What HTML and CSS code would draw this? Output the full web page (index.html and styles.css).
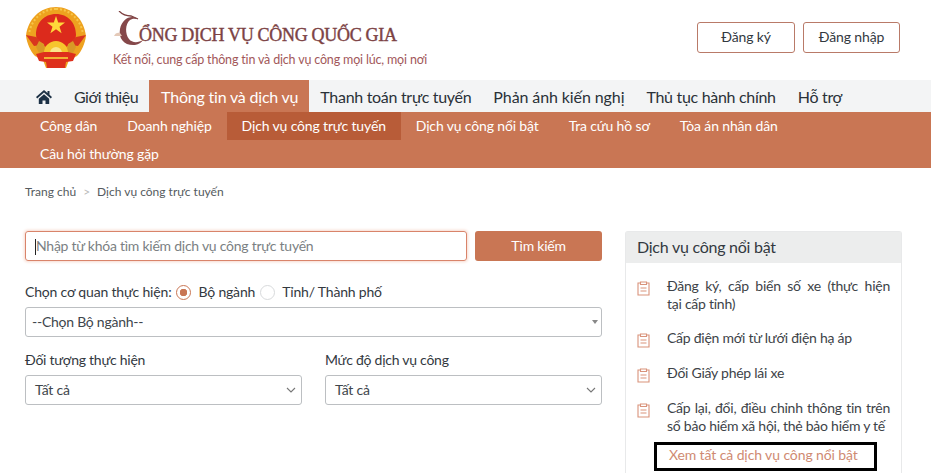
FILE: index.html
```html
<!DOCTYPE html>
<html lang="vi">
<head>
<meta charset="utf-8">
<title>Cổng Dịch vụ công Quốc gia</title>
<link rel="stylesheet" href="styles.css">
</head>
<body>
<header class="top">
  <div class="brand">
    <svg class="emblem" viewBox="0 0 60 62" width="60" height="62">
      <path d="M30 0C14 0 2 12 0 29c1 7 4 15 9 20l8 4 3 8h20l3-8 8-4c5-5 8-13 9-20C58 12 46 0 30 0z" fill="#eea21f"/>
      <path d="M30 2C16 2 5 13 3 27" fill="none" stroke="#f7c64a" stroke-width="2" stroke-dasharray="2 2"/>
      <path d="M30 2c14 0 25 11 27 25" fill="none" stroke="#f7c64a" stroke-width="2" stroke-dasharray="2 2"/>
      <path d="M10 28C10 16 18 7 30 7s20 9 20 21l-1 7c-4 0-7 2-8 5-3-3-7-4-11-4s-8 1-11 4c-1-3-4-5-8-5z" fill="#dc2a1c"/>
      <polygon points="30,9 32.200,15.500 39,15.500 33.500,19.700 35.600,26.200 30,22.200 24.400,26.200 26.500,19.700 21,15.500 27.800,15.500" fill="#ffd83a"/>
      <path d="M0 28l10 2 6 5-1 3-7 1zM60 28l-10 2-6 5 1 3 7 1z" fill="#d9351e"/>
      <path d="M13 34l5 3 1 8-5 3-4-8zM47 34l-5 3-1 8 5 3 4-8z" fill="#d89a26"/>
      <path d="M18 46a12 12 0 0 1 24 0z" fill="#f6c52d"/>
      <path d="M24 46a6 6 0 0 1 12 0z" fill="#fbe58a"/>
      <path d="M10 47l8-2h24l8 2-3 7-7 1-1 6H21l-1-6-7-1z" fill="#de2f1c"/>
      <path d="M18 50h24v2H18z" fill="#f2b233"/>
    </svg>
    <div class="brand-text">
      <div class="brand-title">
        <svg class="brand-mark" viewBox="0 0 32 36" width="32" height="36">
          <path d="M6 0c3 3 7 5 12 5l7 3" fill="none" stroke="#7d4040" stroke-width="1.300"/>
          <path d="M25 8C18 3 9 8 7 18c-2 10 5 17 15 16 4-.5 7-3 8-5-5 3-11 3-14-1-4-5-4-15 1-19 3-2 6-1 8-1z" fill="#85484a"/>
          <path d="M1 25c1-3 4-4 6-3l2 3H2z" fill="#e4c9b8"/>
        </svg>
        <span class="brand-name">ỔNG DỊCH VỤ CÔNG QUỐC GIA</span>
      </div>
      <div class="brand-sub">Kết nối, cung cấp thông tin và dịch vụ công mọi lúc, mọi nơi</div>
    </div>
  </div>
  <div class="auth">
    <a class="auth-btn auth-reg">Đăng ký</a>
    <a class="auth-btn auth-login">Đăng nhập</a>
  </div>
</header>

<nav class="nav">
  <a class="nav-home" aria-label="Trang chủ">
    <svg viewBox="0 0 16 14" width="16" height="14"><path d="M8 0L0 7l1.200 1.400L8 2.500l6.800 5.900L16 7l-2.500-2.200V1h-2v2zM2.800 8.800V14h3.700v-3.500h3V14h3.700V8.800L8 4.300z" fill="#1c3146"/></svg>
  </a>
  <a class="nav-item nav-tight">Giới thiệu</a>
  <a class="nav-item nav-active">Thông tin và dịch vụ</a>
  <a class="nav-item">Thanh toán trực tuyến</a>
  <a class="nav-item nav-wide">Phản ánh kiến nghị</a>
  <a class="nav-item">Thủ tục hành chính</a>
  <a class="nav-item">Hỗ trợ</a>
</nav>
<div class="subnav">
  <a class="sub-item">Công dân</a>
  <a class="sub-item">Doanh nghiệp</a>
  <a class="sub-item sub-active">Dịch vụ công trực tuyến</a>
  <a class="sub-item">Dịch vụ công nổi bật</a>
  <a class="sub-item">Tra cứu hồ sơ</a>
  <a class="sub-item">Tòa án nhân dân</a>
  <a class="sub-item">Câu hỏi thường gặp</a>
</div>

<div class="crumbs"><span>Trang chủ</span><span class="crumb-sep">&gt;</span><span>Dịch vụ công trực tuyến</span></div>

<main class="main">
  <section class="left">
    <div class="search">
      <div class="search-input"><span class="caret"></span>Nhập từ khóa tìm kiếm dịch vụ công trực tuyến</div>
      <a class="search-btn">Tìm kiếm</a>
    </div>
    <div class="agency">
      <span class="agency-label">Chọn cơ quan thực hiện:</span>
      <span class="radio radio-on"></span><span class="radio-text">Bộ ngành</span>
      <span class="radio"></span><span class="radio-text">Tỉnh/ Thành phố</span>
    </div>
    <div class="select select-small"><span>--Chọn Bộ ngành--</span>
      <svg viewBox="0 0 6 4" width="6" height="4"><path d="M0 0h6L3 4z" fill="#888"/></svg>
    </div>
    <div class="fields">
      <div class="field">
        <div class="field-label">Đối tượng thực hiện</div>
        <div class="select"><span>Tất cả</span>
          <svg viewBox="0 0 10 6" width="10" height="6"><path d="M1 1l4 4 4-4" fill="none" stroke="#777" stroke-width="1.100"/></svg>
        </div>
      </div>
      <div class="field">
        <div class="field-label">Mức độ dịch vụ công</div>
        <div class="select"><span>Tất cả</span>
          <svg viewBox="0 0 10 6" width="10" height="6"><path d="M1 1l4 4 4-4" fill="none" stroke="#777" stroke-width="1.100"/></svg>
        </div>
      </div>
    </div>
  </section>

  <aside class="panel">
    <h2 class="panel-head">Dịch vụ công nổi bật</h2>
    <ul class="panel-list">
      <li class="panel-item">
        <svg class="doc" viewBox="0 0 13 15" width="13" height="15"><path d="M3.500 2H1v12h11V2H9.500M3.500 1h6v2.500h-6zM3.500 7h6M3.500 10h6" fill="none" stroke="#d9937b" stroke-width="1.100"/></svg>
        <span class="item-text">Đăng ký, cấp biển số xe (thực hiện tại&nbsp;cấp&nbsp;tỉnh)</span>
      </li>
      <li class="panel-item">
        <svg class="doc" viewBox="0 0 13 15" width="13" height="15"><path d="M3.500 2H1v12h11V2H9.500M3.500 1h6v2.500h-6zM3.500 7h6M3.500 10h6" fill="none" stroke="#d9937b" stroke-width="1.100"/></svg>
        <span class="item-text">Cấp điện mới từ lưới điện hạ áp</span>
      </li>
      <li class="panel-item">
        <svg class="doc" viewBox="0 0 13 15" width="13" height="15"><path d="M3.500 2H1v12h11V2H9.500M3.500 1h6v2.500h-6zM3.500 7h6M3.500 10h6" fill="none" stroke="#d9937b" stroke-width="1.100"/></svg>
        <span class="item-text">Đổi Giấy phép lái xe</span>
      </li>
      <li class="panel-item">
        <svg class="doc" viewBox="0 0 13 15" width="13" height="15"><path d="M3.500 2H1v12h11V2H9.500M3.500 1h6v2.500h-6zM3.500 7h6M3.500 10h6" fill="none" stroke="#d9937b" stroke-width="1.100"/></svg>
        <span class="item-text">Cấp lại, đổi, điều chỉnh thông tin trên sổ bảo hiểm xã hội, thẻ bảo hiểm y tế</span>
      </li>
    </ul>
    <a class="panel-more">Xem tất cả dịch vụ công nổi bật</a>
  </aside>
</main>
</body>
</html>
```

FILE: styles.css
```css
* { box-sizing: border-box; }
html, body { margin: 0; height: 473px; overflow: hidden; background: #fff; }
body { font-family: "Lato", "Noto Sans", sans-serif; color: #33393f; font-size: 14px; letter-spacing: -0.25px; }

.top { height: 80px; display: flex; justify-content: space-between; padding: 6px 31px 0 26px; }
.brand { display: flex; }
.emblem { display: block; margin-top: 1px; }
.brand-text { margin-left: 27px; }
.brand-title { display: flex; align-items: flex-end; height: 37px; margin-top: 4px; }
.brand-mark { display: block; margin-right: -6px; }
.brand-name { font-family: "Liberation Serif", serif; font-size: 18px; line-height: 22px; padding-bottom: 1px; color: #7c4244; font-weight: 400; letter-spacing: -0.3px; -webkit-text-stroke: 0.4px #7c4244; }
.brand-sub { font-size: 12.5px; line-height: 16px; color: #a2585a; margin-top: 5px; letter-spacing: -0.17px; }
.auth { display: flex; gap: 8px; padding-top: 16px; }
.auth-btn { height: 31px; border: 1px solid #b97a68; border-radius: 3px; display: flex; align-items: center; justify-content: center; padding-bottom: 2px; font-size: 14px; color: #33393f; background: #fff; letter-spacing: -0.15px; }
.auth-reg { width: 98px; }
.auth-login { width: 97px; }

.nav { height: 32px; background: #f3f4f5; display: flex; padding-left: 36px; }
.nav-home { display: flex; align-items: center; padding-top: 2px; margin-right: 11px; }
.nav-item { display: flex; align-items: center; padding: 0 11px; font-size: 16px; color: #2a3138; white-space: nowrap; letter-spacing: -0.3px; }
.nav-active { background: #c97654; color: #fff; padding: 0 11px 0 12px; letter-spacing: -0.2px; }
.nav-tight { letter-spacing: -0.5px; }
.nav-wide { letter-spacing: -0.1px; }

.subnav { height: 56px; background: #c97654; display: flex; flex-wrap: wrap; padding-left: 25px; letter-spacing: -0.15px; }
.sub-item { height: 28px; display: flex; align-items: center; padding: 0 15px 2px; color: #fff; font-size: 14px; white-space: nowrap; }
.sub-active { background: #b85c38; }

.crumbs { display: flex; gap: 7px; padding: 16px 0 0 25px; margin-bottom: 1px; font-size: 12px; line-height: 15px; color: #555b60; letter-spacing: 0; }
.crumb-sep { color: #bbb; }

.main { display: grid; grid-template-columns: 577px 277px; column-gap: 23px; padding: 31px 0 0 25px; }

.search { display: flex; gap: 8px; }
.search-input { flex: 1; height: 30px; border: 1px solid #d9846a; border-radius: 3px; box-shadow: 0 0 3px 1px #f7d9ce; display: flex; align-items: center; padding: 0 0 2px 9px; color: #7b7f83; font-size: 14px; }
.caret { width: 1px; height: 16px; background: #222; margin-top: 4px; }
.search-btn { width: 127px; height: 30px; background: #c97654; border-radius: 3px; color: #fff; display: flex; align-items: center; justify-content: center; padding-bottom: 2px; font-size: 14px; }

.agency { display: flex; align-items: center; height: 20px; margin-top: 21px; font-size: 14px; color: #33393f; letter-spacing: -0.18px; }
.agency-label { margin-right: 5px; padding-bottom: 2px; }
.radio { width: 15px; height: 15px; border-radius: 50%; border: 1px solid #d8dadc; background: #fff; display: block; flex: none; }
.radio-on { border-color: #c97654; background: radial-gradient(circle, #c97654 0 3.5px, #fff 4px); }
.radio-text { margin: 0 5px 0 7px; padding-bottom: 2px; }

.select { height: 30px; border: 1px solid #bcbfc2; border-radius: 3px; display: flex; align-items: center; justify-content: space-between; padding: 0 5px 0 9px; color: #40464c; font-size: 14px; background: #fff; }
.select span { padding-bottom: 2px; }
.select-small { margin-top: 5px; padding: 0 3px 0 6px; }

.fields { display: grid; grid-template-columns: 277px 277px; column-gap: 23px; margin-top: 13px; }
.field-label { height: 20px; line-height: 20px; margin-bottom: 5px; color: #33393f; }

.panel { border: 1px solid #e8e9ea; border-bottom: 0; border-radius: 3px 3px 0 0; height: 242px; }
.panel-head { margin: 0; height: 31px; background: #eceded; font-size: 16px; font-weight: 400; line-height: 29px; padding-left: 11px; color: #33393f; }
.panel-list { list-style: none; margin: 0; padding: 14px 11px 0 11px; }
.panel-item { display: flex; margin-bottom: 16px; line-height: 18px; font-size: 14px; color: #3d4348; }
.panel-item:last-child { margin-bottom: 0; }
.doc { flex: none; margin: 4px 17px 0 0; display: block; }
.item-text { flex: 1; text-align: justify; }
.panel-more { display: block; width: 223px; height: 29px; margin: 7px 0 0 28px; border: 3px solid #000; padding-left: 12px; line-height: 20px; color: #cf8a72; font-size: 14px; white-space: nowrap; letter-spacing: -0.1px; }
```
